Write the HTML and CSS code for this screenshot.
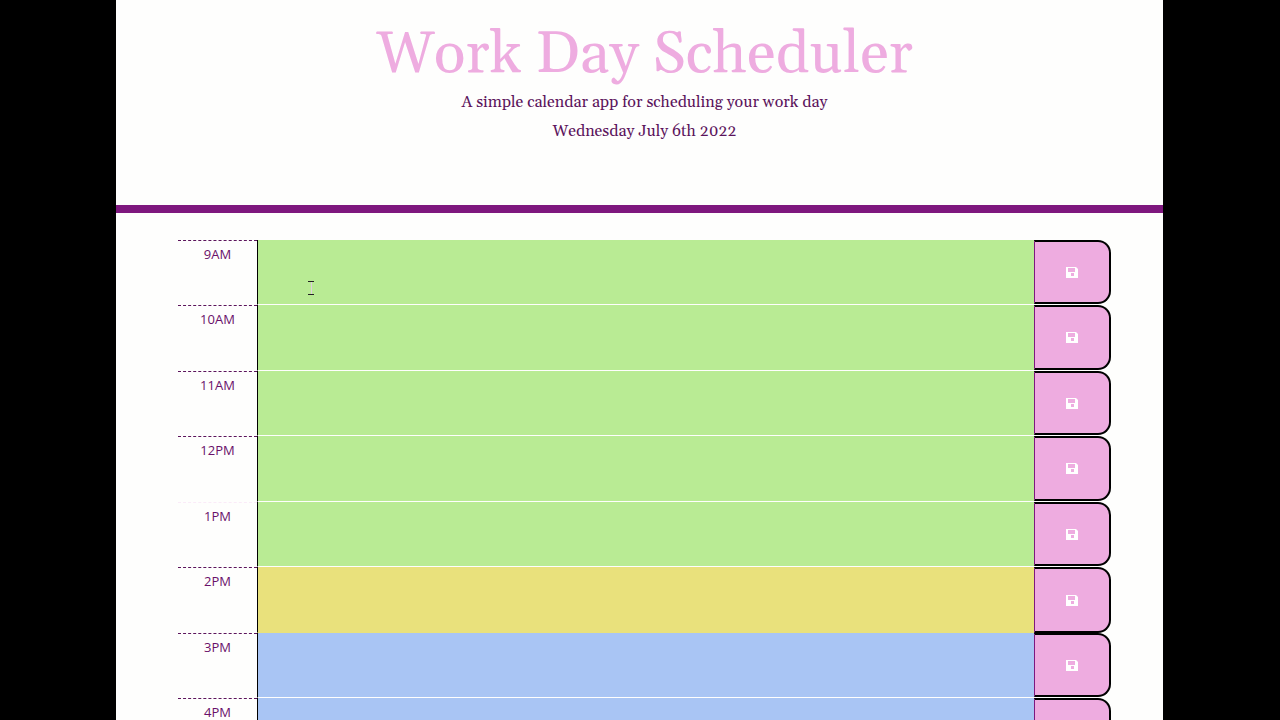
FILE: index.html
```html
<!DOCTYPE html>
<html lang="en">
<head>
<meta charset="utf-8">
<title>Work Day Scheduler</title>
<link rel="stylesheet" href="styles.css">
</head>
<body>
<svg class="symbols" aria-hidden="true">
  <symbol id="save" viewBox="0 0 12 11">
    <path fill-rule="evenodd" d="M0 0H10L12 2V11H0ZM2 1V5H9V1ZM5 6V9H8V6Z"/>
  </symbol>
</svg>
<div class="page">
  <header class="header">
    <h1 class="title">Work Day Scheduler</h1>
    <p class="lead">A simple calendar app for scheduling your work day</p>
    <p class="lead">Wednesday July 6th 2022</p>
  </header>
  <main class="schedule" id="schedule"></main>
</div>
<svg class="cursor" viewBox="0 0 6 14" aria-hidden="true"><path class="cursor-stem" d="M3.5 1V13"/><path class="cursor-ends" d="M0 .5H6M0 13.5H6"/></svg>
<script src="app.js"></script>
</body>
</html>
```
FILE: styles.css
```css
* { box-sizing: border-box; }
body {
  margin: 0;
  height: 100vh;
  overflow: hidden;
  padding: 0 117px 0 116px;
  background: #000;
  font-family: "Open Sans", sans-serif;
}
.symbols { display: none; }
.page { min-height: 100%; background: #fefefd; }
.header {
  height: 213px;
  padding: 19px 0 0 10px;
  border-bottom: 8px solid #7e177e;
  text-align: center;
  font-family: Georgia, Gelasio, "Liberation Serif", serif;
  font-variant-numeric: oldstyle-nums;
  color: #5c145c;
}
.title { margin: 0; font-size: 59px; line-height: 71px; font-weight: 400; color: #eeace0; }
.lead { margin: 0 0 5px; font-size: 16px; line-height: 24px; }
.schedule { padding: 27px 52px 0 62px; }
.row { display: grid; grid-template-columns: 79px 1fr 77px; height: 65px; }
.row:nth-child(even) { height: 66px; }
.hour {
  border-top: 1px dashed #5c145c;
  padding-top: 3px;
  text-align: center;
  font-size: 13px;
  line-height: 20px;
  color: #6a106a;
}
.row:nth-child(5) .hour { border-top-color: #faebf8; }
.entry {
  display: block;
  width: 100%;
  height: 100%;
  margin: 0;
  padding: 8px;
  border: 0;
  border-left: 1px solid #000;
  border-bottom: 1px solid #fefefd;
  border-radius: 0;
  resize: none;
  outline: 0;
  font: inherit;
}
.past { background: #b9eb94; }
.present { background: #e9e17c; border-bottom-color: #e9e17c; }
.future { background: #a9c5f4; }
.save {
  display: flex;
  align-items: center;
  justify-content: center;
  margin: 0 0 1px;
  padding: 0;
  border: 2px solid #000;
  border-left: 1px solid #7e177e;
  border-radius: 0 13px 13px 0;
  background: #eeace0;
}
.present + .save { margin-bottom: 0; }
.icon { width: 12px; height: 11px; fill: #fff; }
.cursor { position: absolute; left: 308px; top: 281px; width: 6px; height: 14px; fill: none; }
.cursor-stem { stroke: #dfcfdb; }
.cursor-ends { stroke: #222; }
```
FILE: app.js
```js
const hours = [
  ['9AM', 'past'], ['10AM', 'past'], ['11AM', 'past'], ['12PM', 'past'],
  ['1PM', 'past'], ['2PM', 'present'], ['3PM', 'future'], ['4PM', 'future']
];
document.getElementById('schedule').innerHTML = hours.map(([label, state]) => `
  <div class="row">
    <label class="hour" for="entry-${label}">${label}</label>
    <textarea class="entry ${state}" id="entry-${label}"></textarea>
    <button class="save" type="button" aria-label="Save ${label}"><svg class="icon"><use href="#save"/></svg></button>
  </div>`).join('');
```
